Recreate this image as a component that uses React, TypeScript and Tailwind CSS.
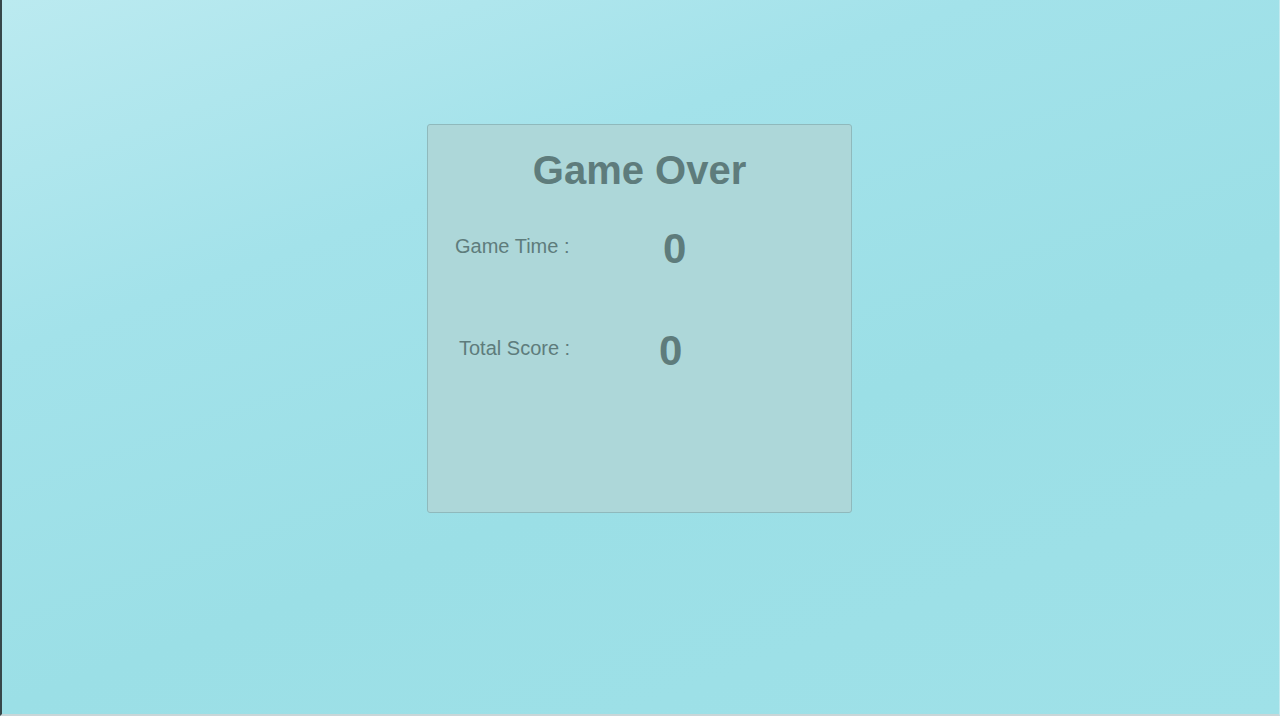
import React from "react";

interface StatRowProps {
  label: string;
  value: number;
  labelBox: string;
  className?: string;
}

// label sits lower than the big number, so rows align to the top
const StatRow: React.FC<StatRowProps> = ({ label, value, labelBox, className }) => (
  <div className={`flex items-start ${className ?? ""}`}>
    <span className={`mt-[8px] shrink-0 text-[20px] leading-none ${labelBox}`}>{label}</span>
    <span className="text-[42px] font-bold leading-none">{value}</span>
  </div>
);

export default function App() {
  const gameTime = 0;
  const totalScore = 0;

  return (
    <div
      className="h-[716px] w-[1280px] overflow-hidden border-l-2 border-r border-b-2 border-l-[#37474a] border-r-[#c3eaef] border-b-[#c9d6d8] bg-[linear-gradient(160deg,#bbeaf0_0%,#a3e2ea_30%,#9bdfe6_60%,#9fe1e8_100%)]"
      style={{ fontFamily: '"Liberation Sans", Arial, sans-serif' }}
    >
      <div className="flex pt-[124px] pl-[425px]">
        <div className="h-[389px] w-[425px] rounded-[3px] border border-[#8fb9bc] bg-[#add7d9] text-[#5e7c7c]">
          <h1 className="pt-[25px] text-center text-[40px] font-bold leading-none">Game Over</h1>
          <StatRow
            label="Game Time :"
            value={gameTime}
            labelBox="w-[235px] pl-[27px]"
            className="mt-[38px]"
          />
          <StatRow
            label="Total Score :"
            value={totalScore}
            labelBox="w-[231px] pl-[31px]"
            className="mt-[60px]"
          />
        </div>
      </div>
    </div>
  );
}
